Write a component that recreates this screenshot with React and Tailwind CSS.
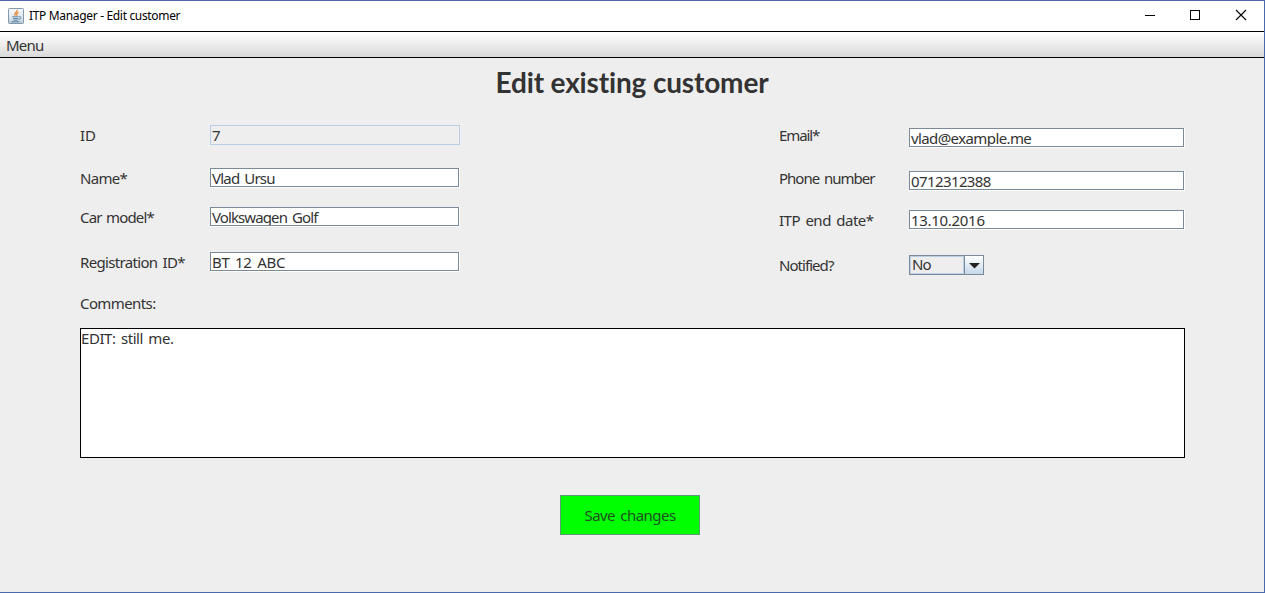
import React from "react";

const label = "w-[130px] shrink-0 whitespace-pre leading-5";

function Label({ children, className = "" }) {
  return <span className={`${label} ${className}`}>{children}</span>;
}

function TextField({ value, className = "", width }) {
  return (
    <div className={`h-5 border-r border-b border-white ${width}`}>
      <div className="h-[19px] overflow-hidden border border-[#7a8a99] bg-white pl-px leading-[19px] whitespace-pre">
        <span className={className}>{value}</span>
      </div>
    </div>
  );
}

function JavaIcon() {
  return (
    <svg width="16" height="16" viewBox="0 0 16 16" className="shrink-0">
      <defs>
        <linearGradient id="tile" x1="0" y1="0" x2="0" y2="1">
          <stop offset="0" stopColor="#f8fafb" />
          <stop offset="0.6" stopColor="#dfe7ed" />
          <stop offset="1" stopColor="#b9c8d6" />
        </linearGradient>
      </defs>
      <rect x="0.5" y="0.5" width="15" height="15" rx="0.8" fill="url(#tile)" stroke="#8298ad" />
      <path d="M9.2 1.8C9.8 3.8 5.4 4.7 7.2 7.9M10.7 4.3C8.6 5 8.1 6 9.2 7.8" fill="none" stroke="#e58a3c" strokeWidth="1.3" />
      <path d="M4.2 8.8h6.5M5 10.6h5.3M5.6 12.2h4M3.3 13.8h8.3" fill="none" stroke="#517b9e" strokeWidth="0.9" />
      <path d="M11 8.8c2.8-.7 2.6 2.2-.4 2.6" fill="none" stroke="#517b9e" strokeWidth="0.9" />
    </svg>
  );
}

function TitleBar() {
  return (
    <header className="flex h-[30px] shrink-0 items-center bg-white pl-2 text-black">
      <JavaIcon />
      <span className="ml-[5px] text-[12px] tracking-[-0.33px] whitespace-pre">ITP Manager - Edit customer</span>
      <svg width="104" height="12" viewBox="0 0 104 12" className="relative -top-px ml-auto mr-[16px]" fill="none" stroke="#000" shapeRendering="crispEdges">
        <path d="M1 6.5h10" />
        <rect x="46.5" y="1.5" width="9" height="9" />
        <path d="M92 1l10 10M102 1l-10 10" shapeRendering="auto" strokeWidth="1.1" />
      </svg>
    </header>
  );
}

export default function App() {
  return (
    <div className="flex h-[593px] w-[1265px] flex-col overflow-hidden border-t border-r border-b border-[#4a69ac] bg-[#eeeeee] font-['Noto_Sans',sans-serif] text-[15px] text-[#333333]">
      <TitleBar />
      <nav className="flex h-[27px] shrink-0 items-center border-y border-black bg-linear-to-b from-white to-[#dadada] pt-0.5 pl-1.5">
        <span className="tracking-[-0.8px]">Menu</span>
      </nav>
      <main className="flex flex-col px-20">
        <h1 className="h-[67px] pt-[6px] text-center font-[Lato] text-[28px] leading-9 font-bold whitespace-pre">
          <span className="tracking-[-0.15px]">Edit existing customer</span>
        </h1>
        <div className="flex justify-between">
          <section className="flex flex-col">
            <div className="flex h-[43px]">
              <Label className="tracking-[-0.1px]">ID</Label>
              <div className="h-5 w-[250px] border border-[#b8cfe5] pl-px leading-[19px]">7</div>
            </div>
            <div className="flex h-[39px]">
              <Label className="tracking-[-0.7px]">Name*</Label>
              <TextField value="Vlad Ursu" width="w-[250px]" className="tracking-[-0.75px] [word-spacing:1.5px]" />
            </div>
            <div className="flex h-[45px]">
              <Label className="tracking-[-0.85px] [word-spacing:1.5px]">Car model*</Label>
              <TextField value="Volkswagen Golf" width="w-[250px]" className="tracking-[-0.9px] [word-spacing:2px]" />
            </div>
            <div className="flex h-[42px]">
              <Label className="tracking-[-0.67px] [word-spacing:2px]">Registration ID*</Label>
              <TextField value="BT 12 ABC" width="w-[250px]" className="tracking-[-0.3px] [word-spacing:2px]" />
            </div>
          </section>
          <section className="mr-[-1px] flex flex-col pt-[3px]">
            <div className="flex h-[43px]">
              <Label className="mt-[-3px] tracking-[-1.1px]">Email*</Label>
              <TextField value="vlad@example.me" width="w-[276px]" className="tracking-[-0.6px]" />
            </div>
            <div className="flex h-[39px]">
              <Label className="mt-[-3px] tracking-[-1px] [word-spacing:2px]">Phone number</Label>
              <TextField value="0712312388" width="w-[276px]" className="tracking-[-0.6px]" />
            </div>
            <div className="flex h-[45px]">
              <Label className="tracking-[-0.5px] [word-spacing:2px]">ITP end date*</Label>
              <TextField value="13.10.2016" width="w-[276px]" className="tracking-[-0.3px]" />
            </div>
            <div className="flex">
              <Label className="tracking-[-0.95px]">Notified?</Label>
              <div className="flex h-5 w-[75px] border border-[#7a8a99]">
                <div className="flex-1 border border-[#b8cfe5] pl-px leading-[15px] tracking-[-0.9px]">No</div>
                <div className="flex w-[19px] items-center justify-center border-l border-[#7a8a99] bg-linear-to-b from-white to-[#c5d8ea] pt-0.5">
                  <svg width="11" height="6" viewBox="0 0 11 6" fill="#222">
                    <path d="M0 0h11L5.5 5.5z" />
                  </svg>
                </div>
              </div>
            </div>
          </section>
        </div>
        <div className="mt-[-1px] h-[35px] leading-5"><span className="tracking-[-0.6px]">Comments:</span></div>
        <div className="mr-[-1px] h-[130px] border border-black bg-white leading-[18px] whitespace-pre">
          <span className="tracking-[-0.45px] [word-spacing:2px]">EDIT: still me.</span>
        </div>
        <button className="mt-[37px] ml-[480px] h-10 w-[140px] border border-[#5d9a76] bg-[#00ff00] pt-px whitespace-pre">
          <span className="tracking-[-0.55px] text-[#1f511f] [word-spacing:2px]">Save changes</span>
        </button>
      </main>
    </div>
  );
}
